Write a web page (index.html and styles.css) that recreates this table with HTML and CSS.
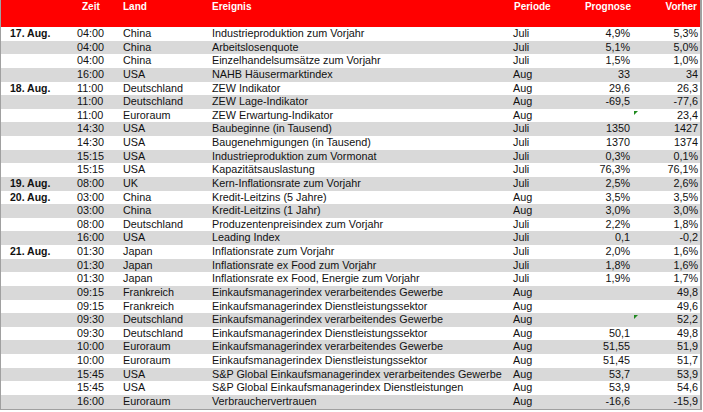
FILE: index.html
```html
<!DOCTYPE html>
<html lang="de">
<head>
<meta charset="utf-8">
<title>Wirtschaftstermine</title>
<link rel="stylesheet" href="styles.css">
</head>
<body>
<div class="sheet">
  <div class="row head">
    <div class="c-date"></div>
    <div class="c-time">Zeit</div>
    <div class="c-land">Land</div>
    <div class="c-event">Ereignis</div>
    <div class="c-per">Periode</div>
    <div class="c-prog">Prognose</div>
    <div class="c-prev">Vorher</div>
  </div>
  <div class="row"><div class="c-date">17. Aug.</div><div class="c-time">04:00</div><div class="c-land">China</div><div class="c-event">Industrieproduktion zum Vorjahr</div><div class="c-per">Juli</div><div class="c-prog">4,9%</div><div class="c-prev">5,3%</div></div>
  <div class="row"><div class="c-date"></div><div class="c-time">04:00</div><div class="c-land">China</div><div class="c-event">Arbeitslosenquote</div><div class="c-per">Juli</div><div class="c-prog">5,1%</div><div class="c-prev">5,0%</div></div>
  <div class="row"><div class="c-date"></div><div class="c-time">04:00</div><div class="c-land">China</div><div class="c-event">Einzelhandelsumsätze zum Vorjahr</div><div class="c-per">Juli</div><div class="c-prog">1,5%</div><div class="c-prev">1,0%</div></div>
  <div class="row"><div class="c-date"></div><div class="c-time">16:00</div><div class="c-land">USA</div><div class="c-event">NAHB Häusermarktindex</div><div class="c-per">Aug</div><div class="c-prog">33</div><div class="c-prev">34</div></div>
  <div class="row"><div class="c-date">18. Aug.</div><div class="c-time">11:00</div><div class="c-land">Deutschland</div><div class="c-event">ZEW Indikator</div><div class="c-per">Aug</div><div class="c-prog">29,6</div><div class="c-prev">26,3</div></div>
  <div class="row"><div class="c-date"></div><div class="c-time">11:00</div><div class="c-land">Deutschland</div><div class="c-event">ZEW Lage-Indikator</div><div class="c-per">Aug</div><div class="c-prog">-69,5</div><div class="c-prev">-77,6</div></div>
  <div class="row"><div class="c-date"></div><div class="c-time">11:00</div><div class="c-land">Euroraum</div><div class="c-event">ZEW Erwartung-Indikator</div><div class="c-per">Aug</div><div class="c-prog"></div><div class="c-prev flag">23,4</div></div>
  <div class="row"><div class="c-date"></div><div class="c-time">14:30</div><div class="c-land">USA</div><div class="c-event">Baubeginne (in Tausend)</div><div class="c-per">Juli</div><div class="c-prog">1350</div><div class="c-prev">1427</div></div>
  <div class="row"><div class="c-date"></div><div class="c-time">14:30</div><div class="c-land">USA</div><div class="c-event">Baugenehmigungen (in Tausend)</div><div class="c-per">Juli</div><div class="c-prog">1370</div><div class="c-prev">1374</div></div>
  <div class="row"><div class="c-date"></div><div class="c-time">15:15</div><div class="c-land">USA</div><div class="c-event">Industrieproduktion zum Vormonat</div><div class="c-per">Juli</div><div class="c-prog">0,3%</div><div class="c-prev">0,1%</div></div>
  <div class="row"><div class="c-date"></div><div class="c-time">15:15</div><div class="c-land">USA</div><div class="c-event">Kapazitätsauslastung</div><div class="c-per">Juli</div><div class="c-prog">76,3%</div><div class="c-prev">76,1%</div></div>
  <div class="row"><div class="c-date">19. Aug.</div><div class="c-time">08:00</div><div class="c-land">UK</div><div class="c-event">Kern-Inflationsrate zum Vorjahr</div><div class="c-per">Juli</div><div class="c-prog">2,5%</div><div class="c-prev">2,6%</div></div>
  <div class="row"><div class="c-date">20. Aug.</div><div class="c-time">03:00</div><div class="c-land">China</div><div class="c-event">Kredit-Leitzins (5 Jahre)</div><div class="c-per">Aug</div><div class="c-prog">3,5%</div><div class="c-prev">3,5%</div></div>
  <div class="row"><div class="c-date"></div><div class="c-time">03:00</div><div class="c-land">China</div><div class="c-event">Kredit-Leitzins (1 Jahr)</div><div class="c-per">Aug</div><div class="c-prog">3,0%</div><div class="c-prev">3,0%</div></div>
  <div class="row"><div class="c-date"></div><div class="c-time">08:00</div><div class="c-land">Deutschland</div><div class="c-event">Produzentenpreisindex zum Vorjahr</div><div class="c-per">Juli</div><div class="c-prog">2,2%</div><div class="c-prev">1,8%</div></div>
  <div class="row"><div class="c-date"></div><div class="c-time">16:00</div><div class="c-land">USA</div><div class="c-event">Leading Index</div><div class="c-per">Juli</div><div class="c-prog">0,1</div><div class="c-prev">-0,2</div></div>
  <div class="row"><div class="c-date">21. Aug.</div><div class="c-time">01:30</div><div class="c-land">Japan</div><div class="c-event">Inflationsrate zum Vorjahr</div><div class="c-per">Juli</div><div class="c-prog">2,0%</div><div class="c-prev">1,6%</div></div>
  <div class="row"><div class="c-date"></div><div class="c-time">01:30</div><div class="c-land">Japan</div><div class="c-event">Inflationsrate ex Food zum Vorjahr</div><div class="c-per">Juli</div><div class="c-prog">1,8%</div><div class="c-prev">1,6%</div></div>
  <div class="row"><div class="c-date"></div><div class="c-time">01:30</div><div class="c-land">Japan</div><div class="c-event">Inflationsrate ex Food, Energie zum Vorjahr</div><div class="c-per">Juli</div><div class="c-prog">1,9%</div><div class="c-prev">1,7%</div></div>
  <div class="row"><div class="c-date"></div><div class="c-time">09:15</div><div class="c-land">Frankreich</div><div class="c-event">Einkaufsmanagerindex verarbeitendes Gewerbe</div><div class="c-per">Aug</div><div class="c-prog"></div><div class="c-prev">49,8</div></div>
  <div class="row"><div class="c-date"></div><div class="c-time">09:15</div><div class="c-land">Frankreich</div><div class="c-event">Einkaufsmanagerindex Dienstleistungssektor</div><div class="c-per">Aug</div><div class="c-prog"></div><div class="c-prev">49,6</div></div>
  <div class="row"><div class="c-date"></div><div class="c-time">09:30</div><div class="c-land">Deutschland</div><div class="c-event">Einkaufsmanagerindex verarbeitendes Gewerbe</div><div class="c-per">Aug</div><div class="c-prog"></div><div class="c-prev flag">52,2</div></div>
  <div class="row"><div class="c-date"></div><div class="c-time">09:30</div><div class="c-land">Deutschland</div><div class="c-event">Einkaufsmanagerindex Dienstleistungssektor</div><div class="c-per">Aug</div><div class="c-prog">50,1</div><div class="c-prev">49,8</div></div>
  <div class="row"><div class="c-date"></div><div class="c-time">10:00</div><div class="c-land">Euroraum</div><div class="c-event">Einkaufsmanagerindex verarbeitendes Gewerbe</div><div class="c-per">Aug</div><div class="c-prog">51,55</div><div class="c-prev">51,9</div></div>
  <div class="row"><div class="c-date"></div><div class="c-time">10:00</div><div class="c-land">Euroraum</div><div class="c-event">Einkaufsmanagerindex Dienstleistungssektor</div><div class="c-per">Aug</div><div class="c-prog">51,45</div><div class="c-prev">51,7</div></div>
  <div class="row"><div class="c-date"></div><div class="c-time">15:45</div><div class="c-land">USA</div><div class="c-event">S&amp;P Global Einkaufsmanagerindex verarbeitendes Gewerbe</div><div class="c-per">Aug</div><div class="c-prog">53,7</div><div class="c-prev">53,9</div></div>
  <div class="row"><div class="c-date"></div><div class="c-time">15:45</div><div class="c-land">USA</div><div class="c-event">S&amp;P Global Einkaufsmanagerindex Dienstleistungen</div><div class="c-per">Aug</div><div class="c-prog">53,9</div><div class="c-prev">54,6</div></div>
  <div class="row"><div class="c-date"></div><div class="c-time">16:00</div><div class="c-land">Euroraum</div><div class="c-event">Verbrauchervertrauen</div><div class="c-per">Aug</div><div class="c-prog">-16,6</div><div class="c-prev">-15,9</div></div>
</div>
</body>
</html>
```
FILE: styles.css
```css
html, body {
  margin: 0;
  padding: 0;
  background: #ffffff;
}

.sheet {
  width: 699px;
  border-left: 1px solid #a0a0a0;
  border-right: 2px solid #a0a0a0;
  border-bottom: 1px solid #a0a0a0;
  font-family: "Liberation Sans", Arial, sans-serif;
  font-size: 10.8px;
  color: #111111;
  display: flex;
  flex-direction: column;
}

.row {
  display: grid;
  grid-template-columns: 74px 45px 90px 300px 50px 73px 67px;
  height: 13.64px;
  line-height: 13.64px;
  white-space: nowrap;
}

.row:nth-child(odd) {
  background: #d9d9d9;
}

.row.head {
  height: 27px;
  line-height: 12px;
  background: #ff0000;
  color: #ffffff;
  font-weight: bold;
  font-size: 10px;
  padding-top: 1px;
  box-sizing: border-box;
}

.c-date {
  padding-left: 9px;
  font-weight: bold;
  font-size: 10.5px;
}

.c-time {
  padding-left: 2px;
}

.head .c-time {
  padding-left: 7px;
}

.c-land {
  padding-left: 3px;
}

.c-event {
  padding-left: 2px;
  overflow: visible;
}

.c-per {
  padding-left: 3px;
}

.head .c-per {
  padding-left: 4px;
}

.c-prog {
  text-align: right;
  padding-right: 3px;
}

.head .c-prog {
  padding-right: 2px;
}

.c-prev {
  text-align: right;
  padding-right: 2px;
  position: relative;
}

.head .c-prev {
  padding-right: 3px;
}

.flag::before {
  content: "";
  position: absolute;
  left: 1px;
  top: 2px;
  width: 0;
  height: 0;
  border-top: 4px solid #1f8a1f;
  border-right: 4px solid transparent;
}
```
